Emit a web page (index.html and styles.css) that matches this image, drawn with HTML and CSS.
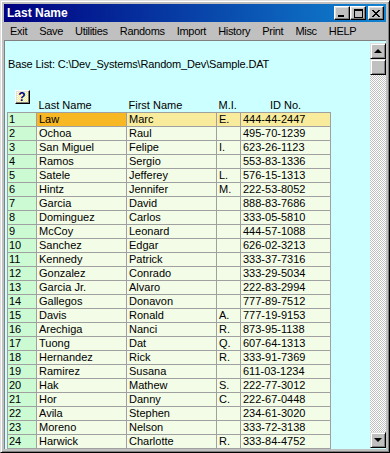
FILE: index.html
```html
<!DOCTYPE html>
<html lang="en">
<head>
  <meta charset="UTF-8">
  <meta name="viewport" content="width=device-width, initial-scale=1.0">
  <title>Last Name</title>
  <link rel="stylesheet" href="styles.css">
</head>
<body>

<div class="window">
  <div class="titlebar">
    <span class="title">Last Name</span>
    <div class="title-btns">
      <span class="tbtn">
        <svg width="8" height="7" viewBox="0 0 8 7" shape-rendering="crispEdges"><rect x="0" y="5" width="6" height="2" fill="#000"/></svg>
      </span>
      <span class="tbtn">
        <svg width="9" height="9" viewBox="0 0 9 9" shape-rendering="crispEdges"><path d="M0 0h9v2H0zM0 2h1v7H0zM8 2h1v7H8zM0 8h9v1H0z" fill="#000"/></svg>
      </span>
      <span class="tbtn tbtn-close">
        <svg width="8" height="7" viewBox="0 0 8 7" shape-rendering="crispEdges"><path d="M0 0h2v1H0zM6 0h2v1H6zM1 1h2v1H1zM5 1h2v1H5zM2 2h4v1H2zM3 3h2v1H3zM2 4h4v1H2zM1 5h2v1H1zM5 5h2v1H5zM0 6h2v1H0zM6 6h2v1H6z" fill="#000"/></svg>
      </span>
    </div>
  </div>

  <div class="menubar">
    <span>Exit</span>
    <span>Save</span>
    <span>Utilities</span>
    <span>Randoms</span>
    <span>Import</span>
    <span>History</span>
    <span>Print</span>
    <span>Misc</span>
    <span>HELP</span>
  </div>

  <div class="client">
    <div class="content">
      <p class="base-list">Base List: C:\Dev_Systems\Random_Dev\Sample.DAT</p>

      <table class="grid">
        <colgroup>
          <col class="c-num">
          <col class="c-name">
          <col class="c-name">
          <col class="c-mi">
          <col class="c-name">
        </colgroup>
        <thead>
          <tr>
            <th class="th-help"><span class="help-btn">?</span></th>
            <th>Last Name</th>
            <th>First Name</th>
            <th>M.I.</th>
            <th class="th-id">ID No.</th>
          </tr>
        </thead>
        <tbody id="rows"></tbody>
      </table>
    </div>

    <div class="scrollbar">
      <div class="sb-btn"><span class="arrow-up"></span></div>
      <div class="sb-thumb"></div>
      <div class="sb-track"></div>
      <div class="sb-btn"><span class="arrow-down"></span></div>
    </div>
  </div>
</div>

<script>
  const people = [
    ['Law', 'Marc', 'E.', '444-44-2447'],
    ['Ochoa', 'Raul', '', '495-70-1239'],
    ['San Miguel', 'Felipe', 'I.', '623-26-1123'],
    ['Ramos', 'Sergio', '', '553-83-1336'],
    ['Satele', 'Jefferey', 'L.', '576-15-1313'],
    ['Hintz', 'Jennifer', 'M.', '222-53-8052'],
    ['Garcia', 'David', '', '888-83-7686'],
    ['Dominguez', 'Carlos', '', '333-05-5810'],
    ['McCoy', 'Leonard', '', '444-57-1088'],
    ['Sanchez', 'Edgar', '', '626-02-3213'],
    ['Kennedy', 'Patrick', '', '333-37-7316'],
    ['Gonzalez', 'Conrado', '', '333-29-5034'],
    ['Garcia Jr.', 'Alvaro', '', '222-83-2994'],
    ['Gallegos', 'Donavon', '', '777-89-7512'],
    ['Davis', 'Ronald', 'A.', '777-19-9153'],
    ['Arechiga', 'Nanci', 'R.', '873-95-1138'],
    ['Tuong', 'Dat', 'Q.', '607-64-1313'],
    ['Hernandez', 'Rick', 'R.', '333-91-7369'],
    ['Ramirez', 'Susana', '', '611-03-1234'],
    ['Hak', 'Mathew', 'S.', '222-77-3012'],
    ['Hor', 'Danny', 'C.', '222-67-0448'],
    ['Avila', 'Stephen', '', '234-61-3020'],
    ['Moreno', 'Nelson', '', '333-72-3138'],
    ['Harwick', 'Charlotte', 'R.', '333-84-4752']
  ];

  const tbody = document.getElementById('rows');

  people.forEach(function (p, i) {
    const tr = document.createElement('tr');
    if (i === 0) tr.className = 'selected';

    const num = document.createElement('td');
    num.className = 'num';
    num.textContent = i + 1;
    tr.appendChild(num);

    p.forEach(function (val, j) {
      const td = document.createElement('td');
      if (j === 0) td.className = 'last';
      td.textContent = val;
      tr.appendChild(td);
    });

    tbody.appendChild(tr);
  });
</script>

</body>
</html>
```

FILE: styles.css
```css
body {
  margin: 0;
  font-family: "Liberation Sans", Arial, sans-serif;
  font-size: 11px;
  color: #000;
  background: #fff;
}

.window {
  width: 390px;
  height: 453px;
  box-sizing: border-box;
  display: flex;
  flex-direction: column;
  padding: 3px;
  background: #c0c0c0;
  border: 1px solid;
  border-color: #dfdfdf #000 #000 #dfdfdf;
  box-shadow: inset 1px 1px #fff, inset -1px -1px #808080;
}

/* title bar */
.titlebar {
  height: 18px;
  display: flex;
  align-items: center;
  justify-content: space-between;
  padding: 0 2px 0 3px;
  background: linear-gradient(to right, #000080, #1084d0);
  color: #fff;
}

.title {
  font-size: 12px;
  font-weight: bold;
}

.title-btns {
  display: flex;
}

.tbtn {
  width: 16px;
  height: 14px;
  box-sizing: border-box;
  display: flex;
  align-items: center;
  justify-content: center;
  background: #c0c0c0;
  border: 1px solid;
  border-color: #fff #000 #000 #fff;
  box-shadow: inset -1px -1px #808080, inset 1px 1px #dfdfdf;
}

.tbtn-close {
  margin-left: 2px;
}

/* menu */
.menubar {
  height: 18px;
  display: flex;
  align-items: center;
  letter-spacing: -0.3px;
}

.menubar span {
  padding: 0 6px;
}

/* client area */
.client {
  flex: 1;
  display: flex;
  min-height: 0;
  background: #ccffff;
  border-top: 1px solid #808080;
  border-left: 1px solid #808080;
}

.content {
  flex: 1;
  padding-top: 17px;
}

.base-list {
  margin: 0;
  padding-left: 3px;
  line-height: 13px;
  letter-spacing: -0.15px;
}

.grid {
  margin: 18px 0 0 2px;
  width: 323px;
  table-layout: fixed;
  border-collapse: collapse;
  line-height: 13px;
}

.c-num {
  width: 29px;
}

.c-name {
  width: 90px;
}

.c-mi {
  width: 24px;
}

.grid th {
  height: 22px;
  padding: 0 2px;
  font-weight: normal;
  text-align: left;
  vertical-align: bottom;
  white-space: nowrap;
}

.grid .th-help {
  text-align: center;
  vertical-align: top;
  padding-top: 1px;
}

.grid .th-id {
  text-align: center;
}

.help-btn {
  display: inline-block;
  width: 15px;
  height: 14px;
  box-sizing: border-box;
  font-weight: bold;
  font-size: 12px;
  line-height: 12px;
  text-align: center;
  color: #000080;
  background: repeating-conic-gradient(#f4f080 0 25%, #fff 0 50%) 0 0 / 2px 2px;
  border: 1px solid;
  border-color: #fff #000 #000 #fff;
  box-shadow: inset -1px -1px #808080, inset 1px 1px #dfdfdf;
}

.grid td {
  height: 13px;
  padding: 0 2px;
  border: 1px solid #a0a0a0;
  background: #f3fce6;
  white-space: nowrap;
  overflow: hidden;
}

.grid td.num {
  padding-left: 1px;
  background: #cbfad3;
}

.selected td {
  background: #f8ec9c;
}

.selected td.last {
  background: #f8b824;
}

/* scrollbar */
.scrollbar {
  width: 16px;
  margin: 2px 0 1px;
  display: flex;
  flex-direction: column;
}

.sb-btn,
.sb-thumb {
  width: 16px;
  height: 16px;
  box-sizing: border-box;
  background: #c0c0c0;
  border: 1px solid;
  border-color: #dfdfdf #000 #000 #dfdfdf;
  box-shadow: inset 1px 1px #fff, inset -1px -1px #808080;
}

.sb-btn {
  display: flex;
  align-items: center;
  justify-content: center;
}

.sb-track {
  flex: 1;
  background: repeating-conic-gradient(#c0c0c0 0 25%, #fff 0 50%) 0 0 / 2px 2px;
}

.arrow-up,
.arrow-down {
  width: 0;
  height: 0;
  border-left: 4px solid transparent;
  border-right: 4px solid transparent;
}

.arrow-up {
  border-bottom: 4px solid #000;
  margin-top: -1px;
}

.arrow-down {
  border-top: 4px solid #000;
}
```
